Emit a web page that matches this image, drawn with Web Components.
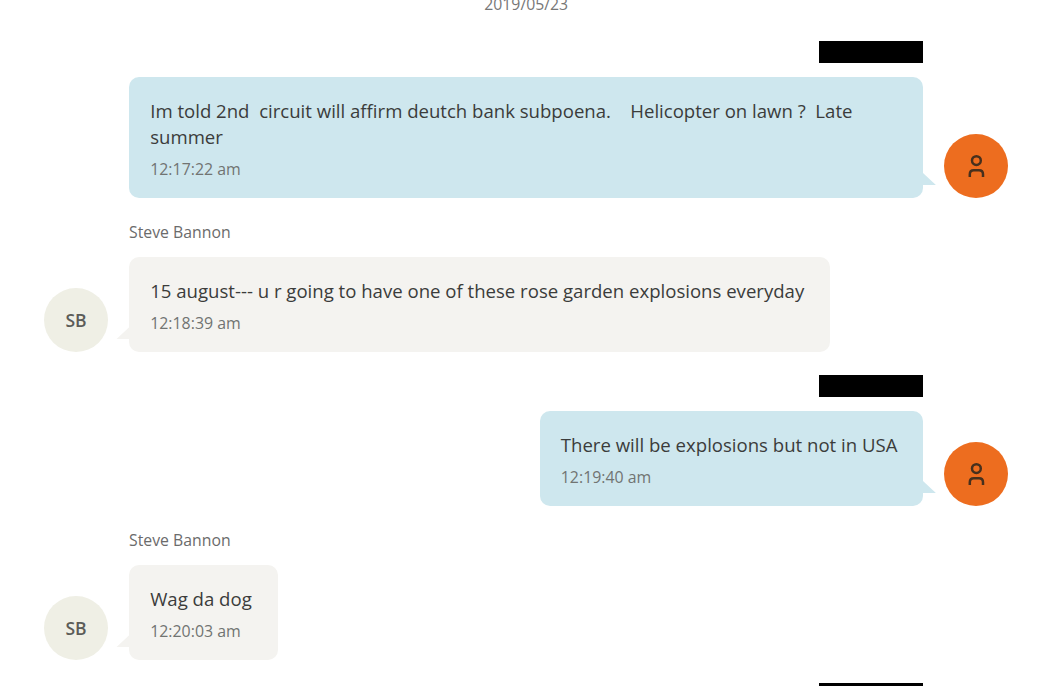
<!DOCTYPE html>
<html lang="en">
<head>
<meta charset="utf-8">
<title>Messages</title>
<style>
  html, body {
    margin: 0;
    height: 686px;
    overflow: hidden;
    background: #fff;
  }
</style>
</head>
<body>
<message-thread date="2019/05/23">
  <chat-message side="right" time="12:17:22 am">Im told 2nd  circuit will affirm deutch bank subpoena.    Helicopter on lawn ?  Late summer</chat-message>
  <chat-message name="Steve Bannon" initials="SB" time="12:18:39 am">15 august--- u r going to have one of these rose garden explosions everyday</chat-message>
  <chat-message side="right" time="12:19:40 am">There will be explosions but not in USA</chat-message>
  <chat-message name="Steve Bannon" initials="SB" time="12:20:03 am">Wag da dog</chat-message>
  <chat-message side="right"></chat-message>
</message-thread>

<script>
(function () {
  class MessageThread extends HTMLElement {
    constructor() {
      super();
      const shadowRoot = this.attachShadow({ mode: "open" });
      shadowRoot.innerHTML = `
      <style>
        :host {
          display: flex;
          flex-direction: column;
          gap: 22.6px;
          box-sizing: border-box;
          width: 1040px;
          height: 686px;
          overflow: hidden;
          padding: 0 31.6px 0 44px;
          font-family: "Open Sans", "Noto Sans", sans-serif;
          color: #3b3c3b;
        }

        .date {
          flex: none;
          height: 23px;
          margin-top: -5px;
          line-height: 18px;
          font-size: 15.8px;
          text-align: center;
          color: #777;
        }
      </style>
      <div class="date">${this.getAttribute("date")}</div>
      <slot></slot>
    `;
    }
  }

  class UserAvatar extends HTMLElement {
    constructor() {
      super();
      const shadowRoot = this.attachShadow({ mode: "open" });
      const initials = this.getAttribute("initials");
      shadowRoot.innerHTML = `
      <style>
        :host {
          display: flex;
          flex: none;
          align-items: center;
          justify-content: center;
          width: 64px;
          height: 64px;
          border-radius: 50%;
          background: ${initials ? "#efefe5" : "#ed6d1f"};
          font-size: 17.5px;
          font-weight: 600;
          color: #5c5c58;
        }

        svg {
          display: block;
          fill: none;
          stroke: #47301d;
          stroke-width: 2.5;
        }
      </style>
      ${initials ? `<span>${initials}</span>` : this.icon()}
    `;
    }

    icon() {
      return `
      <svg width="20" height="24" viewBox="0 0 20 24">
        <circle cx="10.4" cy="6.6" r="4.4"/>
        <path d="M3.8 23v-2.8c0-2.6 1.4-4 4-4h5.2c2.6 0 4 1.4 4 4v2.8"/>
      </svg>`;
    }
  }

  class ChatMessage extends HTMLElement {
    constructor() {
      super();
      const shadowRoot = this.attachShadow({ mode: "open" });
      shadowRoot.innerHTML = this.template();
    }

    template() {
      const name = this.getAttribute("name");
      const initials = this.getAttribute("initials") || "";
      const time = this.getAttribute("time") || "";
      return `
      <style>
        :host {
          display: flex;
          flex: none;
          flex-direction: column;
          gap: 14px;
        }

        .label {
          display: flex;
          height: 22px;
          padding: 0 85px;
          font-size: 15.8px;
          line-height: 22px;
          color: #6b6b6b;
        }

        .redacted {
          width: 104px;
          height: 22px;
          background: #000;
        }

        .row {
          display: flex;
          align-items: flex-end;
          gap: 21px;
        }

        .bubble {
          position: relative;
          box-sizing: border-box;
          max-width: 794.4px;
          padding: 21px 26px 18px 21.2px;
          border-radius: 10px;
          background: #f4f3f0;
        }

        /* tail, overlaps the bubble by 2px so no seam shows */
        .bubble::after {
          content: "";
          position: absolute;
          bottom: 13px;
          left: -13px;
          width: 15px;
          height: 14px;
          background: inherit;
          clip-path: polygon(100% 0, 100% 100%, 0 100%);
        }

        .text {
          font-size: 18.58px;
          line-height: 26.4px;
          white-space: pre-wrap;
        }

        .time {
          padding-top: 7.6px;
          font-size: 15.9px;
          line-height: 22.4px;
          color: #717472;
        }

        :host([side="right"]) .label {
          justify-content: flex-end;
        }

        :host([side="right"]) .row {
          flex-direction: row-reverse;
        }

        :host([side="right"]) .bubble {
          background: #cee7ee;
        }

        :host([side="right"]) .bubble::after {
          left: auto;
          right: -13px;
          clip-path: polygon(0 0, 100% 100%, 0 100%);
        }
      </style>
      <div class="label">${name ? `<span>${name}</span>` : `<div class="redacted"></div>`}</div>
      <div class="row">
        <user-avatar initials="${initials}"></user-avatar>
        <div class="bubble">
          <div class="text"><slot></slot></div>
          <div class="time">${time}</div>
        </div>
      </div>
    `;
    }
  }

  customElements.define("user-avatar", UserAvatar);
  customElements.define("chat-message", ChatMessage);
  customElements.define("message-thread", MessageThread);
})();
</script>
</body>
</html>
